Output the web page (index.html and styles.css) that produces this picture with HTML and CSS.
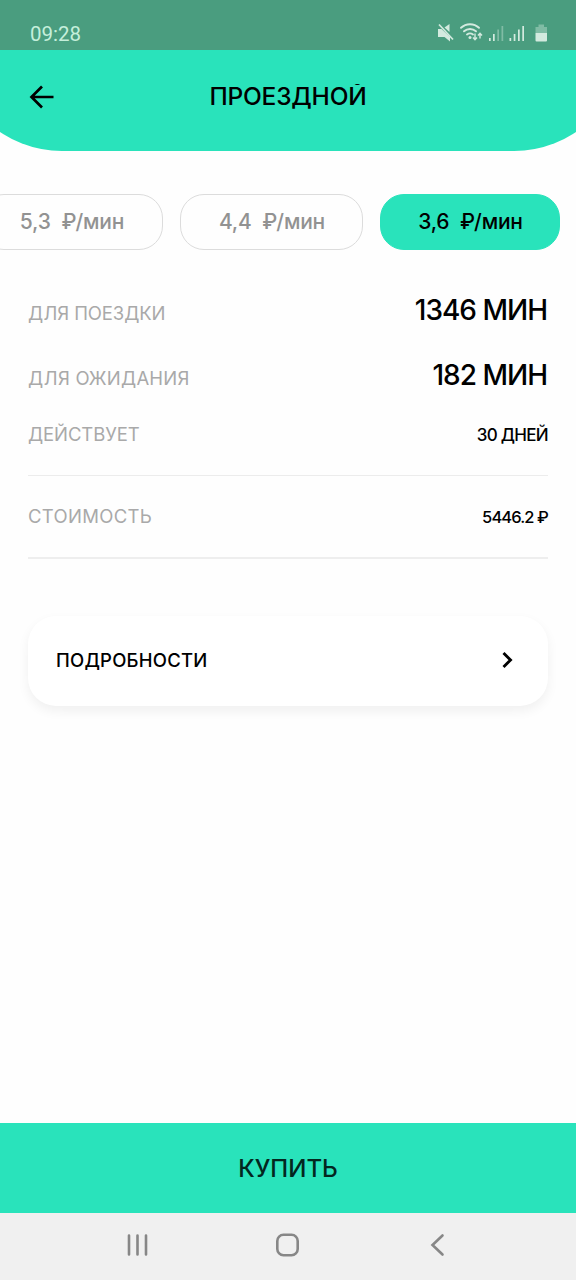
FILE: index.html
```html
<!DOCTYPE html>
<html lang="ru">
<head>
<meta charset="utf-8">
<title>Проездной</title>
<link rel="stylesheet" href="styles.css">
</head>
<body>
<div class="screen">
  <div class="status">
    <span class="clock">09:28</span>
    <svg class="status-icons" width="112" height="22" viewBox="0 0 112 22">
      <g fill="#d3eadf">
        <path d="M2 7h3.500L14 15v4.500L8.500 15H2z"/>
        <path d="M8.500 5.500L13.500 2v8z"/>
        <path d="M3 2.500L17 17.500" stroke="#d3eadf" stroke-width="1.700" fill="none"/>
        <path d="M25 5.800a13 13 0 0 1 18 0M28 9.300a9 9 0 0 1 12 0M31 12.500a5 5 0 0 1 6 0" stroke="#d3eadf" stroke-width="1.900" fill="none" stroke-linecap="round"/>
        <circle cx="34" cy="15.500" r="1.500"/>
        <path d="M39 11.500v6M37 15.500l2 2.300 2-2.300M44 16.500v-5.500M42 13.500l2-2.300 2 2.300" stroke="#d3eadf" stroke-width="1.400" fill="none"/>
        <path d="M53 16h1.700v3H53zM57 12h1.700v7H57z"/>
        <path d="M61.300 7.500H63V19h-1.700zM65.500 4h1.700v15h-1.700z" opacity=".4"/>
        <path d="M73.500 16h1.700v3h-1.700zM77.700 12h1.700v7h-1.700zM82 7.500h1.700V19H82zM86.300 4H88v15h-1.700z"/>
        <path d="M99.500 5h3V2.500h5.500V5h3v6h-11.500z" opacity=".4"/>
        <path d="M99.500 11H111v7.500a1 1 0 0 1-1 1h-9.500a1 1 0 0 1-1-1z"/>
      </g>
    </svg>
  </div>
  <header class="header">
    <svg class="back" width="26" height="24" viewBox="0 0 26 24"><path d="M24.500 12H3M13 1.500L2.500 12 13 22.500" fill="none" stroke="#000" stroke-width="2.700"/></svg>
    <h1 class="title">ПРОЕЗДНОЙ</h1>
  </header>
  <div class="tariffs">
    <div class="chip">5,3&nbsp; ₽/мин</div>
    <div class="chip">4,4&nbsp; ₽/мин</div>
    <div class="chip chip-active">3,6&nbsp; ₽/мин</div>
  </div>
  <main class="details">
    <div class="row row-big"><span class="label l-trip">ДЛЯ ПОЕЗДКИ</span><span class="big">1346 МИН</span></div>
    <div class="row row-big"><span class="label l-wait">ДЛЯ ОЖИДАНИЯ</span><span class="big">182 МИН</span></div>
    <div class="row row-term"><span class="label l-term">ДЕЙСТВУЕТ</span><span class="small s-days">30 ДНЕЙ</span></div>
    <div class="row row-cost"><span class="label l-cost">СТОИМОСТЬ</span><span class="small s-cost">5446.2 ₽</span></div>
  </main>
  <div class="more">
    <span class="more-text">ПОДРОБНОСТИ</span>
    <svg width="14" height="18" viewBox="0 0 14 18"><path d="M2.500 2L9.500 9l-7 7" fill="none" stroke="#000" stroke-width="2.900"/></svg>
  </div>
  <div class="buy"><span class="buy-text">КУПИТЬ</span></div>
  <nav class="nav">
    <svg width="24" height="24" viewBox="0 0 24 24"><path d="M3 2.500v19M11.500 2.500v19M20 2.500v19" stroke="#878787" stroke-width="2.600" stroke-linecap="round"/></svg>
    <svg width="24" height="24" viewBox="0 0 24 24"><rect x="1.300" y="1.800" width="20.400" height="20.400" rx="6.200" fill="none" stroke="#878787" stroke-width="2.600"/></svg>
    <svg width="24" height="24" viewBox="0 0 24 24"><path d="M16.500 2.500L6.500 12l10 9.500" fill="none" stroke="#878787" stroke-width="2.600" stroke-linecap="round"/></svg>
  </nav>
</div>
</body>
</html>
```
FILE: styles.css
```css
body { margin: 0; }
.screen {
  width: 576px;
  height: 1280px;
  display: flex;
  flex-direction: column;
  overflow: hidden;
  background: #fefefe;
  color: #000;
  font-family: Inter, "Noto Sans", sans-serif;
  font-weight: 500;
}
.status {
  height: 50px;
  box-sizing: border-box;
  padding: 18px 28px 0 30px;
  display: flex;
  justify-content: space-between;
  background: #4a9d7f;
}
.clock { font: 400 20.5px/32px Roboto, sans-serif; color: #c5efdb; }
.status-icons { margin: 4px 0 0; }
.header {
  height: 101px;
  width: 664px;
  margin-left: -44px;
  box-sizing: border-box;
  padding: 0 73px;
  display: grid;
  grid-template-columns: 26px 1fr 26px;
  background: #29e3bb;
  border-radius: 0 0 106px 106px / 0 0 101px 101px;
}
.back { margin-top: 35px; }
.title {
  margin: 30px 0 0;
  font-size: 24.500px;
  line-height: 32px;
  font-weight: 500;
  letter-spacing: -.2px;
  text-align: center;
  white-space: nowrap;
  clip-path: inset(4px 0 0 0);
}
.tariffs {
  display: flex;
  gap: 17px;
  margin: 43px 0 0 -20px;
}
.chip {
  width: 183px;
  height: 56px;
  box-sizing: border-box;
  border: 1px solid #dcdcdc;
  border-radius: 24px;
  padding-left: 1px;
  font-size: 21px;
  line-height: 54px;
  letter-spacing: -.2px;
  text-align: center;
  white-space: nowrap;
  color: #929292;
}
.chip-active { width: 180px; border-color: #29e3bb; background: #29e3bb; color: #000; }
.details { margin: 28px 28px 0; }
.row {
  display: flex;
  justify-content: space-between;
  align-items: baseline;
  box-sizing: border-box;
  white-space: nowrap;
}
.row-big { height: 65px; line-height: 65px; }
.row-term { height: 68px; line-height: 52px; border-bottom: 1px solid #ececec; }
.row-cost { height: 83px; line-height: 81px; border-bottom: 2px solid #eee; }
.label { font-size: 18.500px; font-weight: 400; color: #a9a9a9; }
.l-trip { letter-spacing: -.1px; }
.l-wait { letter-spacing: .22px; }
.l-term { letter-spacing: -.1px; }
.l-cost { letter-spacing: .3px; }
.big { font-size: 28px; letter-spacing: -1px; padding-right: 1px; }
.small { font-size: 17px; }
.s-days { letter-spacing: -.7px; }
.s-cost { font-size: 16.500px; letter-spacing: -.9px; }
.more {
  height: 90px;
  box-sizing: border-box;
  margin: 57px 28px 0;
  padding: 0 33px 2px 28px;
  display: flex;
  align-items: center;
  justify-content: space-between;
  border-radius: 28px;
  background: #fff;
  box-shadow: 0 5px 12px rgba(0, 0, 0, .06);
}
.more-text { font-size: 18.500px; letter-spacing: .22px; }
.buy {
  height: 90px;
  margin-top: auto;
  background: #29e3bb;
  color: #03271f;
  font-size: 24px;
  line-height: 91px;
  text-align: center;
}
.nav {
  height: 67px;
  box-sizing: border-box;
  padding: 20px 126px 0;
  display: flex;
  justify-content: space-between;
  background: #f0f0f0;
}
```
